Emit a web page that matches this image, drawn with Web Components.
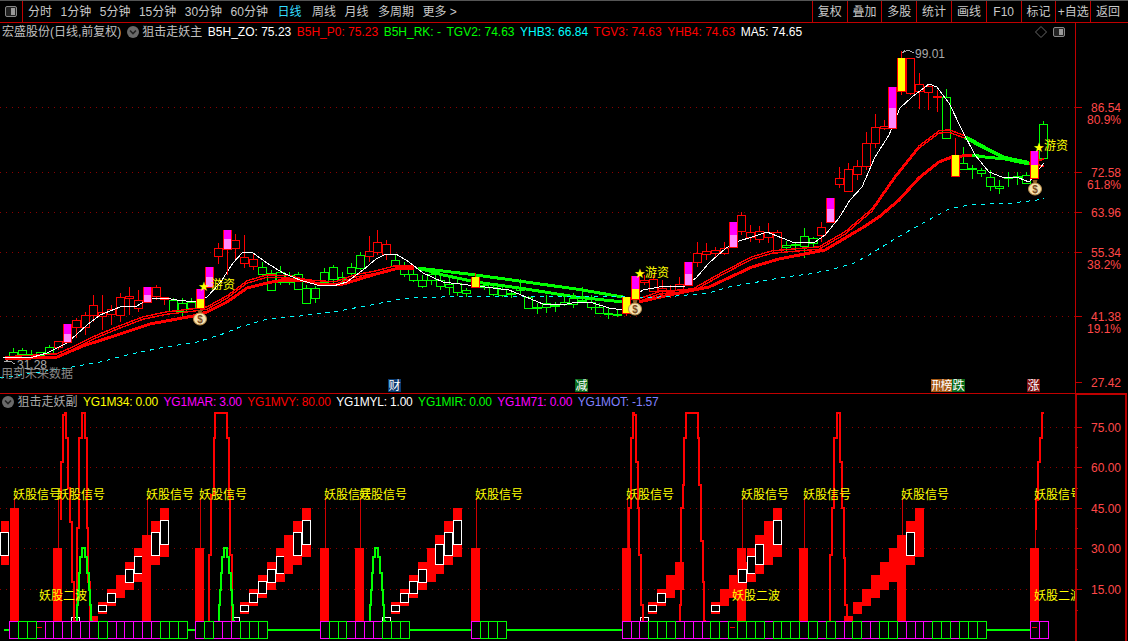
<!DOCTYPE html>
<html lang="zh">
<head>
<meta charset="utf-8">
<title>宏盛股份</title>
<style>
  html, body { margin: 0; padding: 0; background: #000; height: 100%; overflow: hidden; }
  body { font: 12px/1 "Liberation Sans", "Noto Sans CJK SC", sans-serif; color: #c8c8c8; }
</style>
</head>
<body>
<tdx-app>
  <tdx-toolbar>
    <tdx-tab slot="tabs">分时</tdx-tab>
    <tdx-tab slot="tabs">1分钟</tdx-tab>
    <tdx-tab slot="tabs">5分钟</tdx-tab>
    <tdx-tab slot="tabs">15分钟</tdx-tab>
    <tdx-tab slot="tabs">30分钟</tdx-tab>
    <tdx-tab slot="tabs">60分钟</tdx-tab>
    <tdx-tab slot="tabs" active style="margin-left:1px">日线</tdx-tab>
    <tdx-tab slot="tabs" style="margin-left:2px">周线</tdx-tab>
    <tdx-tab slot="tabs">月线</tdx-tab>
    <tdx-tab slot="tabs" style="margin-left:1px">多周期</tdx-tab>
    <tdx-tab slot="tabs">更多 &gt;</tdx-tab>
    <tdx-tool slot="tools">复权</tdx-tool>
    <tdx-tool slot="tools">叠加</tdx-tool>
    <tdx-tool slot="tools">多股</tdx-tool>
    <tdx-tool slot="tools">统计</tdx-tool>
    <tdx-tool slot="tools">画线</tdx-tool>
    <tdx-tool slot="tools">F10</tdx-tool>
    <tdx-tool slot="tools">标记</tdx-tool>
    <tdx-tool slot="tools">+自选</tdx-tool>
    <tdx-tool slot="tools">返回</tdx-tool>
  </tdx-toolbar>

  <chart-pane class="main">
    <tdx-legend slot="legend" controls>
      <legend-item color="#c0c0c0">宏盛股份(日线,前复权)</legend-item>
      <legend-toggle></legend-toggle>
      <legend-item color="#c0c0c0">狙击走妖主</legend-item>
      <legend-item color="#fff">B5H_ZO: 75.23</legend-item>
      <legend-item color="#f00">B5H_P0: 75.23</legend-item>
      <legend-item color="#0f0">B5H_RK: -</legend-item>
      <legend-item color="#0f0">TGV2: 74.63</legend-item>
      <legend-item color="#0ff">YHB3: 66.84</legend-item>
      <legend-item color="#f00">TGV3: 74.63</legend-item>
      <legend-item color="#f00">YHB4: 74.63</legend-item>
      <legend-item color="#fff">MA5: 74.65</legend-item>
    </tdx-legend>
    <kline-chart slot="chart"></kline-chart>
    <price-axis slot="axis" top="23" height="371"
      ticks='[[107,"86.54"],[119,"80.9%",1],[172,"72.58"],[184,"61.8%",1],[212,"63.96"],[252,"55.34"],[264,"38.2%",1],[316,"41.38"],[328,"19.1%",1],[382,"27.42"]]'></price-axis>
  </chart-pane>

  <chart-pane class="sub">
    <tdx-legend slot="legend">
      <legend-toggle></legend-toggle>
      <legend-item color="#a8a8a8">狙击走妖副</legend-item>
      <legend-item color="#ff0" tight>YG1M34: 0.00</legend-item>
      <legend-item color="#f0f" tight>YG1MAR: 3.00</legend-item>
      <legend-item color="#f00" tight>YG1MVY: 80.00</legend-item>
      <legend-item color="#fff" tight>YG1MYL: 1.00</legend-item>
      <legend-item color="#0f0" tight>YG1MIR: 0.00</legend-item>
      <legend-item color="#f0f" tight>YG1M71: 0.00</legend-item>
      <legend-item color="#8080ff" tight>YG1MOT: -1.57</legend-item>
    </tdx-legend>
    <signal-chart slot="chart"></signal-chart>
    <price-axis slot="axis" top="394" height="247" boxed
      ticks='[[427,"75.00"],[447],[467,"60.00"],[488],[508,"45.00"],[528],[548,"30.00"],[569],[589,"15.00"],[610]]'></price-axis>
  </chart-pane>
</tdx-app>

<script>
// screen x of the i-th bar
const BAR = 8.878;
const barX = i => 4.62 + BAR * i;
const snap = x => Math.round((x - 4.62) / BAR);
const FONT = '"Liberation Sans","Noto Sans CJK SC",sans-serif';

function poly(pts, color, width, dash) {
  const p = pts.map(q => q.join(',')).join(' ');
  return `<polyline points="${p}" fill="none" stroke="${color}" stroke-width="${width}"${dash ? ` stroke-dasharray="${dash}"` : ''}/>`;
}
function shift(pts, dy) {
  return pts.map(([x, y]) => [x, y + dy]);
}
// vertical runs with small jogs, the way the lower chart draws its lines
function stairs(pts) {
  const out = [pts[0]];
  for (let i = 1; i < pts.length; i++) {
    out.push([pts[i - 1][0], pts[i][1]], pts[i]);
  }
  return out;
}
function dotted(y) {
  return `<line x1="0" x2="1075" y1="${y}.5" y2="${y}.5" stroke="#8c0000" stroke-dasharray="1 5"/>`;
}
function label(x, y, text, color, size) {
  return `<text x="${x}" y="${y}" fill="${color}" font-size="${size || 12}">${text}</text>`;
}
function box(x, y, w, h, stroke, fill) {
  return `<rect x="${x}" y="${y}" width="${w}" height="${h}" fill="${fill || 'none'}"${stroke ? ` stroke="${stroke}"` : ''}/>`;
}

class TdxApp extends HTMLElement {
  connectedCallback() {
    this.attachShadow({ mode: 'open' }).innerHTML = `
      <style>:host { display: flex; flex-direction: column; width: 1128px; height: 641px; background: #000; overflow: hidden; }</style>
      <slot></slot>`;
  }
}

class TdxToolbar extends HTMLElement {
  connectedCallback() {
    this.attachShadow({ mode: 'open' }).innerHTML = `
      <style>
        :host { display: flex; flex: none; height: 23px; box-sizing: border-box; border-top: 1px solid #555; border-bottom: 1px solid #c00000; }
        .icon { flex: none; width: 22px; display: flex; align-items: center; justify-content: center; border-right: 1px solid #c00000; }
        .tabs { display: flex; align-items: center; gap: 8.5px; padding-left: 5px; flex: 1; }
        .tools { display: flex; padding-right: 3px; }
      </style>
      <div class="icon">
        <svg width="12" height="11" viewBox="0 0 12 11"><rect x="0.5" y="0.5" width="11" height="10" rx="1.5" fill="#222" stroke="#888"/><rect x="6" y="2" width="4" height="7" fill="#999"/></svg>
      </div>
      <div class="tabs"><slot name="tabs"></slot></div>
      <div class="tools"><slot name="tools"></slot></div>`;
  }
}

class TdxTab extends HTMLElement {
  connectedCallback() {
    const color = this.hasAttribute('active') ? '#3df' : '#c8c8c8';
    this.attachShadow({ mode: 'open' }).innerHTML = `
      <style>:host { display: block; color: ${color}; white-space: nowrap; }</style><slot></slot>`;
  }
}

class TdxTool extends HTMLElement {
  connectedCallback() {
    this.attachShadow({ mode: 'open' }).innerHTML = `
      <style>
        :host { display: flex; align-items: center; justify-content: center; width: 34.8px; box-sizing: border-box; border-left: 1px solid #c00000; color: #c8c8c8; white-space: nowrap; }
      </style><slot></slot>`;
  }
}

class ChartPane extends HTMLElement {
  connectedCallback() {
    const main = this.classList.contains('main');
    this.attachShadow({ mode: 'open' }).innerHTML = `
      <style>
        :host { display: grid; grid-template-columns: 1075px 53px; height: ${main ? 371 : 247}px; flex: none; }
        .left { display: flex; flex-direction: column; min-width: 0; }
      </style>
      <div class="left"><slot name="legend"></slot><slot name="chart"></slot></div>
      <slot name="axis"></slot>`;
  }
}

class TdxLegend extends HTMLElement {
  connectedCallback() {
    const sub = this.closest('chart-pane').classList.contains('sub');
    const controls = this.hasAttribute('controls') ? `
      <svg class="controls" width="36" height="12" viewBox="0 0 36 12">
        <path d="M6 0.5 L11.5 6 L6 11.5 L0.5 6 Z" fill="none" stroke="#666"/>
        <rect x="18.5" y="1.5" width="11" height="9" rx="1.5" fill="#222" stroke="#888"/><rect x="24" y="3" width="4" height="6" fill="#999"/>
      </svg>` : '';
    this.attachShadow({ mode: 'open' }).innerHTML = `
      <style>
        :host { display: flex; align-items: center; gap: 5.5px; height: ${sub ? 16 : 18}px; flex: none; padding-left: 2px; box-sizing: border-box; white-space: nowrap; position: relative; }
        .controls { position: absolute; right: 4px; top: 3px; }
      </style>
      <slot></slot>${controls}`;
  }
}

class LegendItem extends HTMLElement {
  connectedCallback() {
    const spacing = this.hasAttribute('tight') ? '-0.2px' : '0';
    this.attachShadow({ mode: 'open' }).innerHTML = `
      <style>:host { display: block; color: ${this.getAttribute('color')}; letter-spacing: ${spacing}; }</style><slot></slot>`;
  }
}

class LegendToggle extends HTMLElement {
  connectedCallback() {
    this.attachShadow({ mode: 'open' }).innerHTML = `
      <style>:host { display: block; width: 12px; height: 12px; flex: none; margin-right: -2px; }</style>
      <svg width="12" height="12" viewBox="0 0 12 12"><circle cx="6" cy="6" r="6" fill="#6a6a6a"/><path d="M3 4.5 L6 7.5 L9 4.5" fill="none" stroke="#222" stroke-width="1.6"/></svg>`;
  }
}

class PriceAxis extends HTMLElement {
  connectedCallback() {
    const top = +this.getAttribute('top');
    const h = +this.getAttribute('height');
    const boxed = this.hasAttribute('boxed');
    const ticks = JSON.parse(this.getAttribute('ticks'));
    let s = '';
    if (boxed) {
      s += `<rect x="0" y="${top - 1}" width="2" height="${h + 1}" fill="#b00000"/>`;
      s += `<rect x="50" y="${top - 1}" width="2" height="${h + 1}" fill="#b00000"/>`;
      s += `<rect x="0" y="${top - 1}" width="52" height="2" fill="#c00000"/>`;
    } else {
      s += `<rect x="0" y="${top}" width="1" height="${h}" fill="#c00000"/>`;
    }
    for (const [y, text, pct] of ticks) {
      if (text) {
        if (!pct) s += `<rect x="0" y="${y}" width="7" height="1" fill="#c00000"/>`;
        s += `<text x="46" y="${y + 5}" text-anchor="end" fill="#ff4848" font-size="12">${text}</text>`;
      } else {
        s += `<rect x="0" y="${y}" width="3" height="1" fill="#c00000"/>`;
      }
    }
    this.attachShadow({ mode: 'open' }).innerHTML = `
      <style>:host { display: block; } svg { display: block; font-family: ${FONT}; overflow: visible; shape-rendering: crispEdges; } text { shape-rendering: auto; }</style>
      <svg width="53" height="${h}" viewBox="0 ${top} 53 ${h}">${s}</svg>`;
  }
}

// x, body top, body bottom, wick high, wick low, colour: all in screen pixels
const CANDLES = [
  [13,352,356,348,357,'g'],[22,350,354,348,356,'g'],[31,354,355,350,357,'g'],[40,352,355,352,356,'g'],[48,347,353,345,354,'g'],
  [57,341,347,341,350,'r'],[75,320,327,318,338,'r'],[84,315,327,312,335,'r'],[93,305,315,295,322,'r'],[102,312,316,295,330,'r'],
  [111,309,314,305,325,'r'],[120,297,315,293,322,'r'],[128,296,298,287,315,'r'],[137,300,308,290,312,'r'],[155,287,296,285,300,'r'],
  [164,297,299,297,305,'r'],[173,300,311,298,312,'g'],[182,303,311,298,316,'g'],[191,302,308,298,310,'g'],[218,248,256,243,264,'r'],
  [236,240,248,234,260,'r'],[245,257,263,235,268,'r'],[254,259,266,253,270,'r'],[263,267,274,262,275,'g'],[271,273,290,270,291,'g'],
  [280,272,282,266,285,'g'],[289,275,282,272,285,'g'],[298,274,289,272,290,'g'],[307,288,303,285,303,'g'],[316,288,298,286,303,'g'],
  [325,272,282,268,285,'g'],[334,267,279,265,285,'g'],[343,277,279,272,284,'g'],[352,267,273,263,275,'g'],[360,255,268,252,270,'g'],
  [369,251,256,236,262,'r'],[378,242,252,230,255,'r'],[387,244,254,240,260,'r'],[395,260,266,255,268,'g'],[404,266,274,262,277,'g'],
  [414,274,280,270,282,'g'],[422,280,286,275,288,'g'],[431,274,280,270,285,'g'],[439,280,286,276,290,'g'],[448,284,287,278,295,'g'],
  [457,283,292,280,296,'g'],[467,290,293,288,297,'g'],[484,285,287,282,290,'g'],[493,287,294,283,296,'g'],[502,289,295,285,297,'g'],
  [511,293,294,290,298,'g'],[520,287,290,279,295,'g'],[529,297,308,296,309,'g'],[538,307,308,303,314,'g'],[546,303,307,295,313,'g'],
  [555,305,306,302,312,'g'],[564,302,304,295,306,'g'],[573,298,304,293,308,'g'],[582,300,301,287,302,'g'],[590,302,307,295,310,'g'],
  [599,307,313,303,313,'g'],[608,313,314,308,319,'g'],[617,314,315,310,317,'g'],[644,280,282,275,285,'r'],[653,279,291,275,292,'r'],
  [662,288,290,280,293,'r'],[671,291,292,285,298,'r'],[680,284,290,277,295,'r'],[698,253,262,242,267,'r'],[707,251,254,243,260,'r'],
  [715,250,253,247,258,'r'],[724,248,253,242,255,'r'],[741,215,231,212,235,'r'],[750,232,237,225,242,'r'],[759,231,239,226,243,'r'],
  [768,232,237,223,243,'r'],[777,232,252,230,254,'r'],[786,245,247,241,252,'g'],[795,244,245,242,251,'g'],[804,236,246,228,258,'g'],
  [812,238,243,237,247,'g'],[821,227,235,222,242,'r'],[839,178,184,167,188,'r'],[848,169,191,163,192,'r'],[857,166,174,160,180,'r'],
  [866,143,166,132,170,'r'],[875,127,143,114,148,'r'],[883,126,128,120,130,'r'],[910,58,93,58,95,'r'],[919,84,91,73,109,'r'],
  [929,86,92,84,110,'r'],[937,96,97,90,112,'r'],[946,97,138,89,139,'g'],[964,163,169,147,170,'g'],[973,168,169,165,179,'g'],
  [982,170,173,168,177,'g'],[991,177,186,170,191,'g'],[999,186,188,180,194,'g'],[1008,177,178,172,187,'g'],[1017,176,177,172,185,'g'],
  [1026,175,183,172,184,'g'],[1043,124,158,121,158,'g']
];

// marked bars: x, wick high, wick low, then colour stops
const MARKS = [
  [66,324,342,[324,334,'#f0f'],[334,342,'#f8f']],
  [146,287,302,[287,295,'#f0f'],[295,302,'#f8f']],
  [200,289,308,[289,299,'#f0f'],[299,308,'#ff0']],
  [209,267,287,[267,277,'#f0f'],[277,287,'#f8f']],
  [227,230,275,[230,239,'#f0f'],[239,249,'#f8f']],
  [475,273,287,[277,287,'#ff0']],
  [626,297,316,[297,313,'#ff0']],
  [635,276,299,[276,289,'#f0f'],[289,299,'#ff0']],
  [688,262,285,[262,274,'#f0f'],[274,285,'#f8f']],
  [732,222,247,[222,235,'#f0f'],[235,247,'#f8f']],
  [830,198,222,[198,209,'#f0f'],[209,222,'#f8f']],
  [893,87,128,[87,108,'#f0f'],[108,128,'#f8f']],
  [901,51,95,[58,91,'#ff0']],
  [955,138,176,[155,176,'#ff0']],
  [1035,151,178,[151,165,'#f0f'],[165,178,'#ff0']]
];

const MA5 = [[3,358],[33,357],[47,353],[67,343],[87,325],[100,315],[120,307],[137,306],[150,298],[165,298],[177,300],[195,302],[207,297],[220,283],[233,263],[243,252],[253,253],[267,263],[283,273],[300,280],[317,285],[333,286],[347,282],[363,270],[376,259],[386,254],[396,254],[409,262],[423,273],[443,282],[476,286],[493,288],[509,290],[526,297],[543,304],[563,305],[576,302],[593,303],[609,308],[623,310],[633,297],[643,290],[659,287],[669,286],[683,287],[696,278],[709,263],[726,248],[739,241],[752,237],[767,232],[782,238],[795,243],[815,242],[825,235],[839,218],[850,200],[862,187],[875,157],[889,135],[900,108],[912,97],[929,84],[937,87],[949,103],[962,130],[975,155],[989,172],[1002,177],[1019,178],[1029,182],[1044,163]];
const CYAN = [[0,378],[40,372],[72,367],[100,362],[127,355],[160,348],[197,342],[220,335],[240,327],[267,319],[300,316],[333,312],[376,304],[396,300],[409,298],[476,296],[543,297],[609,296],[643,298],[676,296],[709,293],[729,287],[752,283],[785,277],[809,274],[829,270],[852,264],[869,255],[885,245],[905,233],[925,222],[949,209],[969,205],[1012,203],[1037,200],[1044,198]];

const UPPER_A = [[5,358],[57,355],[73,348],[93,338],[117,328],[143,318],[167,313],[193,310],[207,308],[227,297],[247,282],[267,276],[290,277],[307,281],[320,282],[335,283],[355,276],[376,272],[395,267],[414,267]];
const LOWER_A = [[5,359],[57,357],[83,346],[117,335],[150,324],[193,316],[207,312],[227,302],[247,288],[267,283],[283,280],[300,280],[320,284],[340,285],[376,274],[395,269],[414,268]];
const GREEN_A = [[418,268],[476,275],[526,282],[576,289],[623,297]];
const GREEN_B = [[418,268],[443,275],[476,282],[526,289],[576,297],[623,302]];
const UPPER_B = [[639,300],[659,293],[693,290],[723,273],[752,258],[772,252],[819,248],[845,233],[872,210],[895,177],[919,147],[939,132],[949,131],[965,137]];
const LOWER_B = [[639,302],[669,295],[709,287],[752,267],[779,259],[825,250],[862,228],[879,217],[899,200],[919,178],[939,162],[952,157],[972,155]];
const GREEN_C = [[965,137],[985,148],[1005,158],[1029,163]];
const GREEN_D = [[972,155],[985,157],[1005,159],[1029,164]];

function moneyBag(cx, cy) {
  return `<g transform="translate(${cx} ${cy})" style="shape-rendering:auto">
    <path d="M-2.5 -8 L2.5 -8 L1.5 -4.5 L-1.5 -4.5 Z" fill="#8a5a20"/>
    <ellipse cx="0" cy="1" rx="6.5" ry="6" fill="#f6e2ae" stroke="#b98a45"/>
    <text x="0" y="4.5" text-anchor="middle" font-size="10" font-weight="bold" fill="#7a4a20">$</text>
  </g>`;
}
function star(cx, cy) {
  return `<text x="${cx - 6}" y="${cy + 5}" fill="#ff0" font-size="13" font-family="DejaVu Sans">★</text>`;
}
function tag(x, text, bg) {
  return `<rect x="${x}" y="379" width="13" height="13" fill="${bg}"/><text x="${x}.5" y="390" fill="#fff" font-size="12">${text}</text>`;
}

class KlineChart extends HTMLElement {
  connectedCallback() {
    let s = [107, 172, 212, 252, 316].map(dotted).join('');
    for (const [x0, top, bot, hi, lo, c] of CANDLES) {
      const x = Math.round(barX(snap(x0)));
      const col = c === 'g' ? '#0f0' : '#f00';
      s += `<line x1="${x + .5}" x2="${x + .5}" y1="${hi}" y2="${lo}" stroke="${col}"/>`;
      s += box(x - 3.5, top + .5, 8, Math.max(bot - top, 1), col, '#000');
    }
    // ribbons
    s += poly(shift(UPPER_A, -1.2), '#f00', 1.4) + poly(shift(UPPER_A, 1.2), '#f00', 1.4);
    s += poly(LOWER_A, '#f00', 3);
    s += poly(shift(UPPER_B, -1.2), '#f00', 1.4) + poly(shift(UPPER_B, 1.2), '#f00', 1.4);
    s += poly(LOWER_B, '#f00', 3);
    s += poly(GREEN_A, '#0f0', 3) + poly(GREEN_B, '#0f0', 3);
    s += poly(GREEN_C, '#0f0', 4) + poly(GREEN_D, '#0f0', 3);
    s += poly([[1029, 163], [1044, 159]], '#f00', 2) + poly([[1029, 164], [1044, 166]], '#f00', 2);
    s += poly(CYAN, '#0ff', 1, '4 5');
    s += poly(MA5, '#fff', 1);
    for (const [x0, hi, lo, ...stops] of MARKS) {
      const x = Math.round(barX(snap(x0)));
      s += `<line x1="${x + .5}" x2="${x + .5}" y1="${hi}" y2="${lo}" stroke="#f00"/>`;
      for (const [a, b, col] of stops) {
        s += box(x - 3.5, a + .5, 8, b - a, '#f00', col);
        s += box(x - 3, a, 7, b - a, null, col);
      }
    }
    s += moneyBag(200, 318) + moneyBag(635, 308) + moneyBag(1035, 188);
    s += star(204, 286) + label(211, 289, '游资', '#ff0');
    s += star(640, 273) + label(645, 277, '游资', '#ff0');
    s += star(1039, 147) + label(1044, 150, '游资', '#ff0');
    // high and low marks
    s += `<path d="M902 53 L905 50 M902 53 L908 50 L914 53" fill="none" stroke="#aaa"/>` + label(915, 58, '99.01', '#aaa');
    s += `<path d="M4 362 L8 360 M4 362 L10 361 L15 364" fill="none" stroke="#aaa"/>` + label(17, 369, '31.28', '#aaa');
    s += label(1, 378, '用到未来数据', '#888');
    s += tag(388, '财', '#0a3a70') + tag(575, '减', '#0a6a1a') + tag(931, '刑', '#a85a14') + tag(940, '榜', '#a85a14') + tag(952, '跌', '#0a6a1a') + tag(1027, '涨', '#801010');
    s += `<rect x="0" y="393" width="1075" height="1" fill="#c00000"/>`;
    this.attachShadow({ mode: 'open' }).innerHTML = `
      <style>
        :host { display: block; height: 353px; overflow: hidden; }
        svg { display: block; font-family: ${FONT}; shape-rendering: crispEdges; }
        text { shape-rendering: auto; }
      </style>
      <svg width="1075" height="353" viewBox="0 41 1075 353">${s}</svg>`;
  }
}

// floating blocks of the lower chart, in screen pixels
const STEPS = [[602,614],[589,606],[575,598],[562,590],[548,582],[535,574],[521,565],[508,557]];
const BODIES = [[605,611],[593,602],[581,593],[569,582],[556,573],[544,564],[532,555],[520,544]];

// start x, then for each of the 8 rungs whether it shows a white body
const LADDERS = [
  [98, '11011011'], [240, '11111011'], [391, '11110111'], [648, '1100'], [711, '10011101'], [853, '00000010']
];
const COLUMNS = [[14,508],[57.5,548],[146.5,535],[199.5,548],[324.5,548],[359.5,548],[475.5,548],[626.5,548],[741.5,548],[803.5,548],[901.5,535],[1034.5,548]];
const LABELS_A = [13,57,146,199,324,359,475,626,741,803,901,1034];
const LABELS_B = [39,732,1034];
const SPIKES = [
  [[61,520],[63,462],[65,415],[66,413],[68,438],[70,488],[72,522],[74,582],[76,621]],
  [[77,621],[79,528],[82,438],[83,413],[85,413],[87,438],[88,528],[90,582],[93,621]],
  [[209,621],[211,555],[214,495],[215,438],[217,413],[227,413],[229,438],[230,495],[232,555],[234,621]],
  [[629,548],[631,508],[633,438],[634,413],[636,415],[638,462],[639,508],[641,555],[643,605],[644,621]],
  [[680,621],[681,605],[683,508],[684,485],[686,438],[688,413],[698,413],[699,438],[701,485],[703,541],[704,582],[706,621]],
  [[830,621],[832,555],[834,508],[837,438],[839,413],[840,413],[842,462],[844,508],[845,558],[847,605],[848,621]],
  [[1036,530],[1038,500],[1040,462],[1042,438],[1043,413],[1044,413]]
];
const GREEN_PEAKS = [84, 226, 377];
const greenSpike = p => [[-7,621],[-6,605],[-5,590],[-4,573],[-2,557],[0,548],[1,548],[3,557],[5,573],[6,590],[7,605],[9,621]].map(([dx, y]) => [p + dx, y]);
// runs of the bottom strip: first bar, M=magenta G=green
const STRIP = [
  [1, 'MGGMMMMMMMGMMMMMMGGG'],
  [22, 'MGMMMGGG'],
  [36, 'MGGMMMMGGG'],
  [53, 'MGGG'],
  [70, 'MMMGGGMMMMGMGGGGMGGGMGMGMMGMMGGMMMMGGMGGG'],
  [116, 'MM']
];

class SignalChart extends HTMLElement {
  connectedCallback() {
    let s = [427, 467, 508, 548, 589].map(dotted).join('');
    for (const [x, top] of COLUMNS) {
      const left = Math.round(x - 4.5);
      s += box(left, top, 9, 621 - top, null, '#f00');
      s += `<line x1="${Math.round(x) + .5}" x2="${Math.round(x) + .5}" y1="497" y2="${top}" stroke="#d00000"/>`;
    }
    // ladders of red blocks
    for (const [x0, mask] of LADDERS) {
      mask.split('').forEach((on, k) => {
        const x = Math.round(x0 + k * 8.878);
        s += box(x, STEPS[k][0], 9, STEPS[k][1] - STEPS[k][0], null, '#f00');
        if (on === '1') s += box(x + .5, BODIES[k][0] + .5, 8, BODIES[k][1] - BODIES[k][0], '#fff', '#000');
      });
    }
    // left edge and the odd blocks that are not part of a ladder
    s += box(1, 521, 8, 44, null, '#f00') + box(0.5, 532.5, 8, 23, '#fff', '#000');
    s += box(89, 616, 9, 5, null, '#f00') + box(844, 616, 9, 5, null, '#f00');
    for (const x of [71, 231, 382, 640]) {
      s += box(x + .5, 617.5, 8, 3.5, '#fff', '#000');
    }
    for (const pts of SPIKES) s += poly(stairs(pts), '#f00', 2);
    for (const p of GREEN_PEAKS) s += poly(stairs(greenSpike(p)), '#0f0', 2);
    // strip
    s += poly([[4, 630], [9, 630]], '#0f0', 2);
    s += poly([[187, 630], [195, 630]], '#0f0', 2) + poly([[267, 630], [320, 630]], '#0f0', 2);
    s += poly([[409, 630], [471, 630]], '#0f0', 2) + poly([[506, 630], [622, 630]], '#0f0', 2) + poly([[986, 630], [1030, 630]], '#0f0', 2);
    for (const want of ['M', 'G']) {
      for (const [first, cols] of STRIP) {
        cols.split('').forEach((c, k) => {
          if (c !== want) return;
          const left = Math.round(0.18 + BAR * (first + k));
          const right = Math.round(0.18 + BAR * (first + k + 1));
          s += box(left + .5, 621.5, right - left, 17, c === 'M' ? '#f0f' : '#0f0');
        });
      }
    }
    for (const x of [37, 730, 1032]) s += box(x, 627, 5, 1, null, '#f00');
    for (const x of LABELS_A) s += label(x, 499, '妖股信号', '#ff0');
    for (const x of LABELS_B) s += label(x, 600, '妖股二波', '#ff0');
    this.attachShadow({ mode: 'open' }).innerHTML = `
      <style>
        :host { display: block; height: 231px; overflow: hidden; }
        svg { display: block; font-family: ${FONT}; shape-rendering: crispEdges; }
        text { shape-rendering: auto; }
      </style>
      <svg width="1075" height="231" viewBox="0 410 1075 231">${s}</svg>`;
  }
}

customElements.define('tdx-app', TdxApp);
customElements.define('tdx-toolbar', TdxToolbar);
customElements.define('tdx-tab', TdxTab);
customElements.define('tdx-tool', TdxTool);
customElements.define('chart-pane', ChartPane);
customElements.define('tdx-legend', TdxLegend);
customElements.define('legend-item', LegendItem);
customElements.define('legend-toggle', LegendToggle);
customElements.define('price-axis', PriceAxis);
customElements.define('kline-chart', KlineChart);
customElements.define('signal-chart', SignalChart);
</script>
</body>
</html>
